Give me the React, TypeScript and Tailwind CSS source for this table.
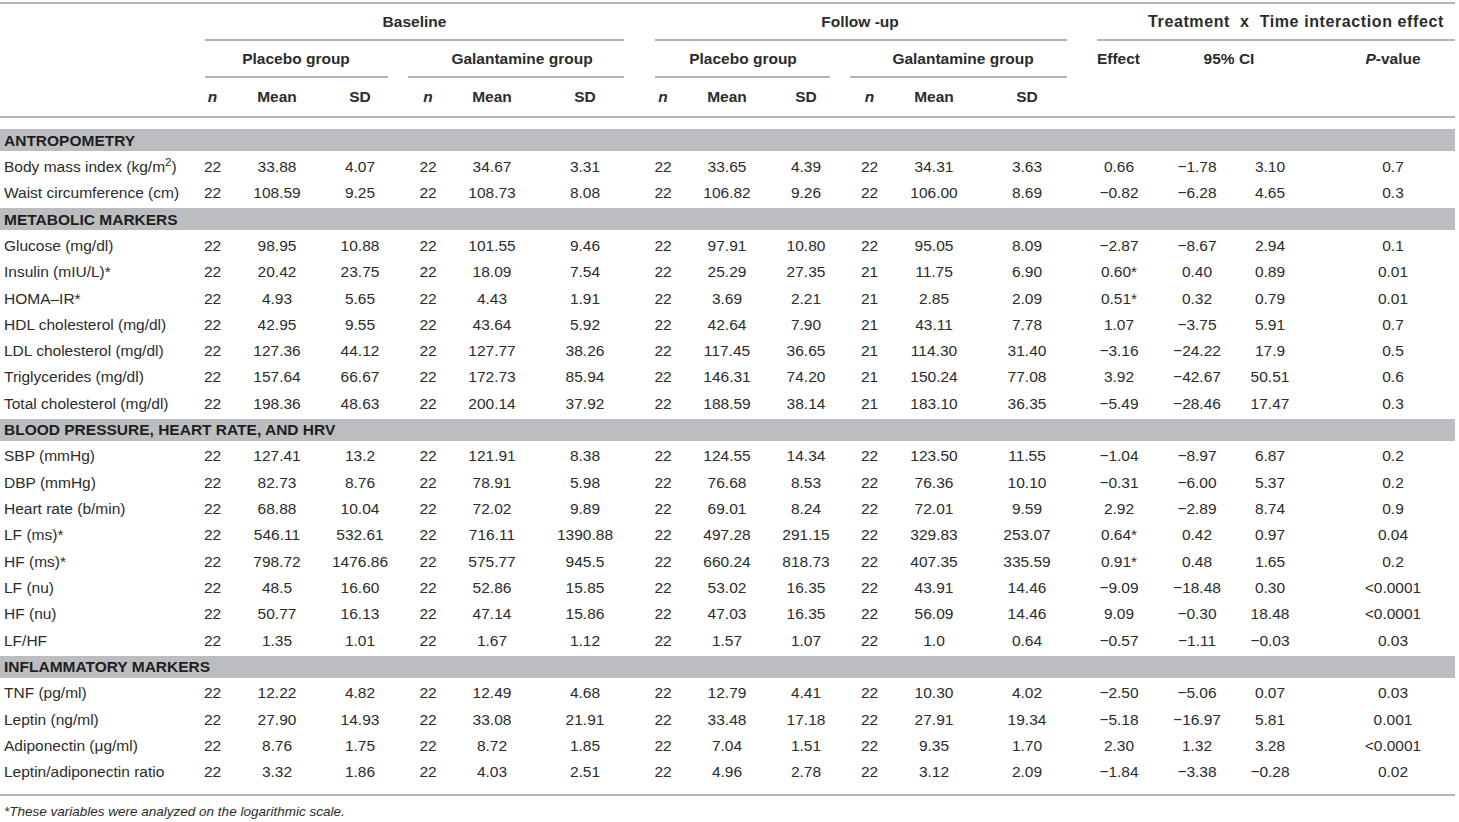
import React from "react";

const cols =
  "grid grid-cols-[180px_65px_74px_75px_66px_79px_85px_71px_72px_70px_65px_79px_92px_85px_76px_97px_124px]";

const pads = [
  "",
  "pr-[10px]",
  "pl-[7px]",
  "pl-[2px]",
  "pr-[15px]",
  "pl-[7px]",
  "pl-[7px]",
  "pr-[8px]",
  "pl-[8px]",
  "",
  "pr-[15px]",
  "",
  "pl-[7px]",
  "pl-[2px]",
  "pr-[25px]",
  "",
];

type Row = { label: React.ReactNode; values: string[] };
type Section = { title: string; rows: Row[] };

const m = "\u2212";

const sections: Section[] = [
  {
    title: "ANTROPOMETRY",
    rows: [
      {
        label: (
          <>
            Body mass index (kg/m<sup>2</sup>)
          </>
        ),
        values: ["22", "33.88", "4.07", "22", "34.67", "3.31", "22", "33.65", "4.39", "22", "34.31", "3.63", "0.66", `${m}1.78`, "3.10", "0.7"],
      },
      {
        label: "Waist circumference (cm)",
        values: ["22", "108.59", "9.25", "22", "108.73", "8.08", "22", "106.82", "9.26", "22", "106.00", "8.69", `${m}0.82`, `${m}6.28`, "4.65", "0.3"],
      },
    ],
  },
  {
    title: "METABOLIC MARKERS",
    rows: [
      { label: "Glucose (mg/dl)", values: ["22", "98.95", "10.88", "22", "101.55", "9.46", "22", "97.91", "10.80", "22", "95.05", "8.09", `${m}2.87`, `${m}8.67`, "2.94", "0.1"] },
      { label: "Insulin (mIU/L)*", values: ["22", "20.42", "23.75", "22", "18.09", "7.54", "22", "25.29", "27.35", "21", "11.75", "6.90", "0.60*", "0.40", "0.89", "0.01"] },
      { label: "HOMA\u2013IR*", values: ["22", "4.93", "5.65", "22", "4.43", "1.91", "22", "3.69", "2.21", "21", "2.85", "2.09", "0.51*", "0.32", "0.79", "0.01"] },
      { label: "HDL cholesterol (mg/dl)", values: ["22", "42.95", "9.55", "22", "43.64", "5.92", "22", "42.64", "7.90", "21", "43.11", "7.78", "1.07", `${m}3.75`, "5.91", "0.7"] },
      { label: "LDL cholesterol (mg/dl)", values: ["22", "127.36", "44.12", "22", "127.77", "38.26", "22", "117.45", "36.65", "21", "114.30", "31.40", `${m}3.16`, `${m}24.22`, "17.9", "0.5"] },
      { label: "Triglycerides (mg/dl)", values: ["22", "157.64", "66.67", "22", "172.73", "85.94", "22", "146.31", "74.20", "21", "150.24", "77.08", "3.92", `${m}42.67`, "50.51", "0.6"] },
      { label: "Total cholesterol (mg/dl)", values: ["22", "198.36", "48.63", "22", "200.14", "37.92", "22", "188.59", "38.14", "21", "183.10", "36.35", `${m}5.49`, `${m}28.46`, "17.47", "0.3"] },
    ],
  },
  {
    title: "BLOOD PRESSURE, HEART RATE, AND HRV",
    rows: [
      { label: "SBP (mmHg)", values: ["22", "127.41", "13.2", "22", "121.91", "8.38", "22", "124.55", "14.34", "22", "123.50", "11.55", `${m}1.04`, `${m}8.97`, "6.87", "0.2"] },
      { label: "DBP (mmHg)", values: ["22", "82.73", "8.76", "22", "78.91", "5.98", "22", "76.68", "8.53", "22", "76.36", "10.10", `${m}0.31`, `${m}6.00`, "5.37", "0.2"] },
      { label: "Heart rate (b/min)", values: ["22", "68.88", "10.04", "22", "72.02", "9.89", "22", "69.01", "8.24", "22", "72.01", "9.59", "2.92", `${m}2.89`, "8.74", "0.9"] },
      { label: "LF (ms)*", values: ["22", "546.11", "532.61", "22", "716.11", "1390.88", "22", "497.28", "291.15", "22", "329.83", "253.07", "0.64*", "0.42", "0.97", "0.04"] },
      { label: "HF (ms)*", values: ["22", "798.72", "1476.86", "22", "575.77", "945.5", "22", "660.24", "818.73", "22", "407.35", "335.59", "0.91*", "0.48", "1.65", "0.2"] },
      { label: "LF (nu)", values: ["22", "48.5", "16.60", "22", "52.86", "15.85", "22", "53.02", "16.35", "22", "43.91", "14.46", `${m}9.09`, `${m}18.48`, "0.30", "<0.0001"] },
      { label: "HF (nu)", values: ["22", "50.77", "16.13", "22", "47.14", "15.86", "22", "47.03", "16.35", "22", "56.09", "14.46", "9.09", `${m}0.30`, "18.48", "<0.0001"] },
      { label: "LF/HF", values: ["22", "1.35", "1.01", "22", "1.67", "1.12", "22", "1.57", "1.07", "22", "1.0", "0.64", `${m}0.57`, `${m}1.11`, `${m}0.03`, "0.03"] },
    ],
  },
  {
    title: "INFLAMMATORY MARKERS",
    rows: [
      { label: "TNF (pg/ml)", values: ["22", "12.22", "4.82", "22", "12.49", "4.68", "22", "12.79", "4.41", "22", "10.30", "4.02", `${m}2.50`, `${m}5.06`, "0.07", "0.03"] },
      { label: "Leptin (ng/ml)", values: ["22", "27.90", "14.93", "22", "33.08", "21.91", "22", "33.48", "17.18", "22", "27.91", "19.34", `${m}5.18`, `${m}16.97`, "5.81", "0.001"] },
      { label: "Adiponectin (\u03bcg/ml)", values: ["22", "8.76", "1.75", "22", "8.72", "1.85", "22", "7.04", "1.51", "22", "9.35", "1.70", "2.30", "1.32", "3.28", "<0.0001"] },
      { label: "Leptin/adiponectin ratio", values: ["22", "3.32", "1.86", "22", "4.03", "2.51", "22", "4.96", "2.78", "22", "3.12", "2.09", `${m}1.84`, `${m}3.38`, `${m}0.28`, "0.02"] },
    ],
  },
];

function Rule() {
  return <div className="h-[2px] bg-[#b4b4b4]" />;
}

// header cell with optional underline
function HeadCell({
  span,
  pad,
  line,
  children,
}: {
  span: string;
  pad: string;
  line?: string;
  children?: React.ReactNode;
}) {
  return (
    <div className={`${span} flex flex-col`}>
      <div className={`flex-1 flex items-center justify-center font-bold ${pad}`}>{children}</div>
      <div className={line ? `h-[2px] bg-[#b4b4b4] ${line}` : "h-[2px]"} />
    </div>
  );
}

export default function App() {
  const sub = ["n", "Mean", "SD", "n", "Mean", "SD", "n", "Mean", "SD", "n", "Mean", "SD"];

  return (
    <div className="w-[1455px] bg-white text-[15.5px] text-[#2c2c2c] font-['Liberation_Sans',Arial,sans-serif]">
      <div className="h-[2px]" />
      <Rule />

      {/* header row 1 */}
      <div className={`${cols} h-[37px]`}>
        <div />
        <HeadCell span="col-span-6" pad="pl-[25px]" line="ml-[25px]">Baseline</HeadCell>
        <HeadCell span="col-span-6" pad="pl-[23px]" line="ml-[31px] mr-[6px]">Follow -up</HeadCell>
        <HeadCell span="col-span-4" pad="pl-[64px] text-[16px] tracking-[0.6px] whitespace-pre" line="ml-[24px]">
          {"Treatment  x  Time interaction effect"}
        </HeadCell>
      </div>

      {/* header row 2 */}
      <div className={`${cols} h-[37px]`}>
        <div />
        <HeadCell span="col-span-3" pad="pl-[18px]" line="ml-[25px] mr-[6px]">Placebo group</HeadCell>
        <HeadCell span="col-span-3" pad="pl-[26px]" line="ml-[14px]">Galantamine group</HeadCell>
        <HeadCell span="col-span-3" pad="pl-[25px]" line="ml-[31px] mr-[7px]">Placebo group</HeadCell>
        <HeadCell span="col-span-3" pad="pl-[16px]" line="ml-[13px] mr-[6px]">Galantamine group</HeadCell>
        <HeadCell span="col-span-1" pad="pl-[6px]">Effect</HeadCell>
        <HeadCell span="col-span-2" pad="pr-[31px]">95% CI</HeadCell>
        <HeadCell span="col-span-1" pad="pl-0">
          <span>
            <i>P</i>-value
          </span>
        </HeadCell>
      </div>

      {/* header row 3 */}
      <div className={`${cols} h-[38px] items-center font-bold`}>
        <div />
        {sub.map((s, i) => (
          <div key={i} className={`text-center ${pads[i]} ${s === "n" ? "italic" : ""}`}>
            {s}
          </div>
        ))}
      </div>
      <Rule />
      <div className="h-[9px]" />

      {sections.map((sec) => (
        <div key={sec.title}>
          <div className="h-[26.33px] flex items-center">
            <div className="h-[22px] w-full bg-[#bcbdc0] flex items-center pl-[4px] font-bold text-[#1e1e1e]">
              {sec.title}
            </div>
          </div>
          {sec.rows.map((r, i) => (
            <div key={i} className={`${cols} h-[26.33px] items-center`}>
              <div className="pl-[4px] whitespace-nowrap">{r.label}</div>
              {r.values.map((v, j) => (
                <div key={j} className={`text-center whitespace-nowrap ${pads[j]}`}>
                  {v}
                </div>
              ))}
            </div>
          ))}
        </div>
      ))}

      <div className="h-[9px]" />
      <Rule />
      <div className="pt-[6px] pl-[4px] text-[13.5px] leading-[20px] italic">
        *These variables were analyzed on the logarithmic scale.
      </div>
    </div>
  );
}
